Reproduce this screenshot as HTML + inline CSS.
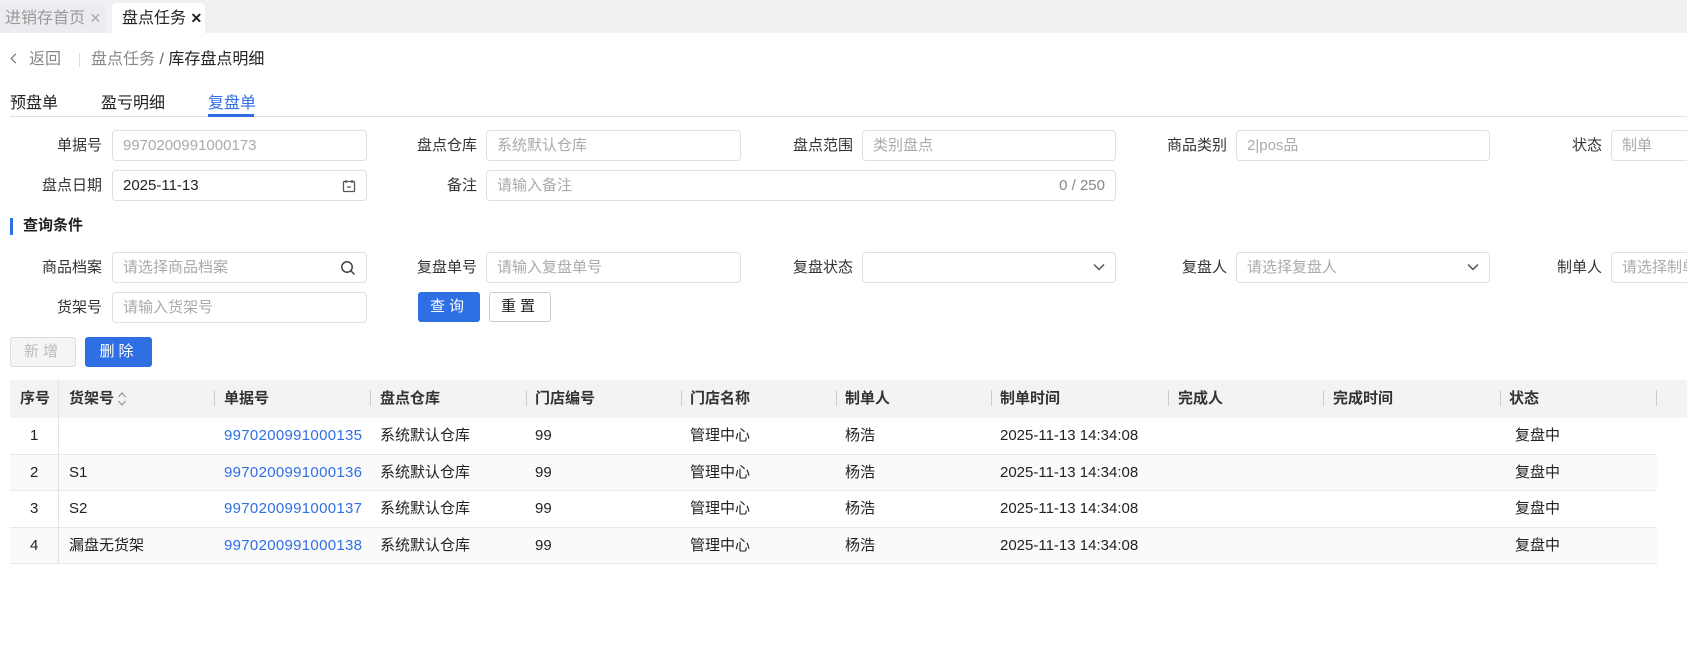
<!DOCTYPE html>
<html><head><meta charset="utf-8">
<style>
*{margin:0;padding:0;box-sizing:border-box}
body{width:1687px;height:647px;overflow:hidden;background:#fff;font-family:"Liberation Sans","Noto Sans CJK SC",sans-serif;font-size:15px;color:#222;position:relative}
.a{position:absolute;white-space:nowrap}
.lbl{position:absolute;text-align:right;font-size:15px;color:#333;line-height:30px;padding-top:1px}
.inp{position:absolute;height:31px;border:1px solid #dcdfe6;border-radius:4px;font-size:15px;color:#aaa;line-height:29px;padding-left:10px;background:#fff;overflow:hidden;white-space:nowrap}
.btn{position:absolute;height:30px;border-radius:3px;font-size:15px;text-align:center;line-height:28px;letter-spacing:4px}
.th{position:absolute;top:380px;height:38px;line-height:38px;font-weight:bold;font-size:15px;color:#333}
.sep{position:absolute;top:390px;width:1px;height:16px;background:#ccc}
.row{position:absolute;left:10px;width:1647px;height:36.6px;border-bottom:1px solid #e8e8e8}
.c{position:absolute;line-height:36px;font-size:15px;color:#222}
.blue{color:#2f6fe4;letter-spacing:0.3px}
</style></head><body>
<div class="a" style="left:0;top:0;width:1687px;height:33px;background:#f1f1f3"></div>
<div class="a" style="left:0;top:3px;width:105px;height:30px;background:#ebecef;border-radius:4px 4px 0 0;color:#999;font-size:16px;line-height:30px;padding-left:5px">进销存首页 <span style="font-size:14px;color:#aaa">✕</span></div>
<div class="a" style="left:112px;top:3px;width:93px;height:30px;background:#fff;border-radius:4px 4px 0 0;color:#222;font-size:16px;line-height:30px;padding-left:10px">盘点任务 <span style="font-size:14px;font-weight:bold">✕</span></div>

<div class="a" style="left:12px;top:50px;font-size:16px;color:#888;line-height:20px"><span style="display:inline-block;width:7px;height:7px;border-left:1.5px solid #666;border-bottom:1.5px solid #666;transform:rotate(45deg);margin-right:10px;position:relative;top:-2px"></span>返回</div>
<div class="a" style="left:79px;top:53px;width:1px;height:14px;background:#ddd"></div>
<div class="a" style="left:91px;top:50px;font-size:16px;color:#888;line-height:20px">盘点任务 <span style="color:#666">/</span> <span style="color:#222">库存盘点明细</span></div>

<div class="a" style="left:10px;top:89px;font-size:16px;color:#222">预盘单</div>
<div class="a" style="left:101px;top:89px;font-size:16px;color:#222">盈亏明细</div>
<div class="a" style="left:208px;top:89px;font-size:16px;color:#2f6fe4">复盘单</div>
<div class="a" style="left:10px;top:116px;width:1677px;height:1px;background:#e0e0e0"></div>
<div class="a" style="left:208px;top:114px;width:46px;height:3px;background:#2f6fe4"></div>

<div class="lbl" style="left:0;width:102px;top:130px">单据号</div>
<div class="inp" style="left:112px;width:255px;top:130px">9970200991000173</div>
<div class="lbl" style="left:380px;width:97px;top:130px">盘点仓库</div>
<div class="inp" style="left:486px;width:255px;top:130px">系统默认仓库</div>
<div class="lbl" style="left:760px;width:93px;top:130px">盘点范围</div>
<div class="inp" style="left:862px;width:254px;top:130px">类别盘点</div>
<div class="lbl" style="left:1130px;width:97px;top:130px">商品类别</div>
<div class="inp" style="left:1236px;width:254px;top:130px">2|pos品</div>
<div class="lbl" style="left:1520px;width:82px;top:130px">状态</div>
<div class="inp" style="left:1611px;width:90px;top:130px">制单</div>

<div class="lbl" style="left:0;width:102px;top:170px">盘点日期</div>
<div class="inp" style="left:112px;width:255px;top:170px;color:#222">2025-11-13
<svg style="position:absolute;right:10px;top:8px" width="14" height="14" viewBox="0 0 14 14" fill="none" stroke="#555" stroke-width="1.3"><rect x="1.5" y="2.5" width="11" height="10" rx="1"/><path d="M4 1v3M10 1v3M5 8h4"/></svg></div>
<div class="lbl" style="left:380px;width:97px;top:170px">备注</div>
<div class="inp" style="left:486px;width:630px;top:170px">请输入备注<span style="position:absolute;right:10px;color:#888">0 / 250</span></div>

<div class="a" style="left:10px;top:218px;width:3px;height:17px;background:#2f6fe4"></div>
<div class="a" style="left:23px;top:216px;font-size:15px;font-weight:bold;color:#222;line-height:20px">查询条件</div>

<div class="lbl" style="left:0;width:102px;top:252px">商品档案</div>
<div class="inp" style="left:112px;width:255px;top:252px">请选择商品档案
<svg style="position:absolute;right:10px;top:7px" width="16" height="16" viewBox="0 0 16 16" fill="none" stroke="#444" stroke-width="1.5"><circle cx="7" cy="7" r="5.2"/><path d="M11 11l3.5 3.5"/></svg></div>
<div class="lbl" style="left:380px;width:97px;top:252px">复盘单号</div>
<div class="inp" style="left:486px;width:255px;top:252px">请输入复盘单号</div>
<div class="lbl" style="left:760px;width:93px;top:252px">复盘状态</div>
<div class="inp" style="left:862px;width:254px;top:252px"><svg style="position:absolute;right:10px;top:10px" width="12" height="8" viewBox="0 0 12 8" fill="none" stroke="#555" stroke-width="1.5"><path d="M1 1.5l5 5 5-5"/></svg></div>
<div class="lbl" style="left:1130px;width:97px;top:252px">复盘人</div>
<div class="inp" style="left:1236px;width:254px;top:252px">请选择复盘人<svg style="position:absolute;right:10px;top:10px" width="12" height="8" viewBox="0 0 12 8" fill="none" stroke="#555" stroke-width="1.5"><path d="M1 1.5l5 5 5-5"/></svg></div>
<div class="lbl" style="left:1520px;width:82px;top:252px">制单人</div>
<div class="inp" style="left:1611px;width:90px;top:252px">请选择制单</div>

<div class="lbl" style="left:0;width:102px;top:292px">货架号</div>
<div class="inp" style="left:112px;width:255px;top:292px">请输入货架号</div>
<div class="btn" style="left:418px;top:292px;width:62px;background:#2f6fe4;color:#fff;border:1px solid #2f6fe4">查询</div>
<div class="btn" style="left:489px;top:292px;width:62px;background:#fff;color:#222;border:1px solid #ccc">重置</div>

<div class="btn" style="left:10px;top:337px;width:66px;background:#f5f5f5;color:#bbb;border:1px solid #ddd">新增</div>
<div class="btn" style="left:85px;top:337px;width:67px;background:#2f6fe4;color:#fff;border:1px solid #2f6fe4">删除</div>

<div class="a" style="left:10px;top:380px;width:1677px;height:38px;background:#f2f3f5"></div>
<div class="a" style="left:58px;top:380px;width:1px;height:184px;background:#e3e3e3"></div>
<div class="th" style="left:20px">序号</div>
<div class="th" style="left:69px">货架号</div>
<svg class="a" style="left:117px;top:390px" width="10" height="18" viewBox="0 0 10 18" fill="none" stroke="#999" stroke-width="1.3"><path d="M1.5 7l3.5-4 3.5 4M1.5 11l3.5 4 3.5-4"/></svg>
<div class="sep" style="left:214px"></div><div class="th" style="left:224px">单据号</div>
<div class="sep" style="left:370px"></div><div class="th" style="left:380px">盘点仓库</div>
<div class="sep" style="left:526px"></div><div class="th" style="left:535px">门店编号</div>
<div class="sep" style="left:681px"></div><div class="th" style="left:690px">门店名称</div>
<div class="sep" style="left:836px"></div><div class="th" style="left:845px">制单人</div>
<div class="sep" style="left:991px"></div><div class="th" style="left:1000px">制单时间</div>
<div class="sep" style="left:1168px"></div><div class="th" style="left:1178px">完成人</div>
<div class="sep" style="left:1323px"></div><div class="th" style="left:1333px">完成时间</div>
<div class="sep" style="left:1500px"></div><div class="th" style="left:1509px">状态</div>
<div class="sep" style="left:1656px"></div>

<div class="row" style="top:418px;background:#fff"></div>
<div class="row" style="top:454.6px;background:#fafafa"></div>
<div class="row" style="top:491.2px;background:#fff"></div>
<div class="row" style="top:527.8px;background:#fafafa"></div>
<div class="a" style="left:58px;top:418px;width:1px;height:146px;background:#e3e3e3"></div>

<div class="c" style="left:30px;top:418px">1</div>
<div class="c blue" style="left:224px;top:418px">9970200991000135</div><div class="c" style="left:380px;top:418px">系统默认仓库</div><div class="c" style="left:535px;top:418px">99</div><div class="c" style="left:690px;top:418px">管理中心</div><div class="c" style="left:845px;top:418px">杨浩</div><div class="c" style="left:1000px;top:418px">2025-11-13 14:34:08</div><div class="c" style="left:1515px;top:418px">复盘中</div>

<div class="c" style="left:30px;top:454.6px">2</div><div class="c" style="left:69px;top:454.6px">S1</div>
<div class="c blue" style="left:224px;top:454.6px">9970200991000136</div><div class="c" style="left:380px;top:454.6px">系统默认仓库</div><div class="c" style="left:535px;top:454.6px">99</div><div class="c" style="left:690px;top:454.6px">管理中心</div><div class="c" style="left:845px;top:454.6px">杨浩</div><div class="c" style="left:1000px;top:454.6px">2025-11-13 14:34:08</div><div class="c" style="left:1515px;top:454.6px">复盘中</div>

<div class="c" style="left:30px;top:491.2px">3</div><div class="c" style="left:69px;top:491.2px">S2</div>
<div class="c blue" style="left:224px;top:491.2px">9970200991000137</div><div class="c" style="left:380px;top:491.2px">系统默认仓库</div><div class="c" style="left:535px;top:491.2px">99</div><div class="c" style="left:690px;top:491.2px">管理中心</div><div class="c" style="left:845px;top:491.2px">杨浩</div><div class="c" style="left:1000px;top:491.2px">2025-11-13 14:34:08</div><div class="c" style="left:1515px;top:491.2px">复盘中</div>

<div class="c" style="left:30px;top:527.8px">4</div><div class="c" style="left:69px;top:527.8px">漏盘无货架</div>
<div class="c blue" style="left:224px;top:527.8px">9970200991000138</div><div class="c" style="left:380px;top:527.8px">系统默认仓库</div><div class="c" style="left:535px;top:527.8px">99</div><div class="c" style="left:690px;top:527.8px">管理中心</div><div class="c" style="left:845px;top:527.8px">杨浩</div><div class="c" style="left:1000px;top:527.8px">2025-11-13 14:34:08</div><div class="c" style="left:1515px;top:527.8px">复盘中</div>
</body></html>
